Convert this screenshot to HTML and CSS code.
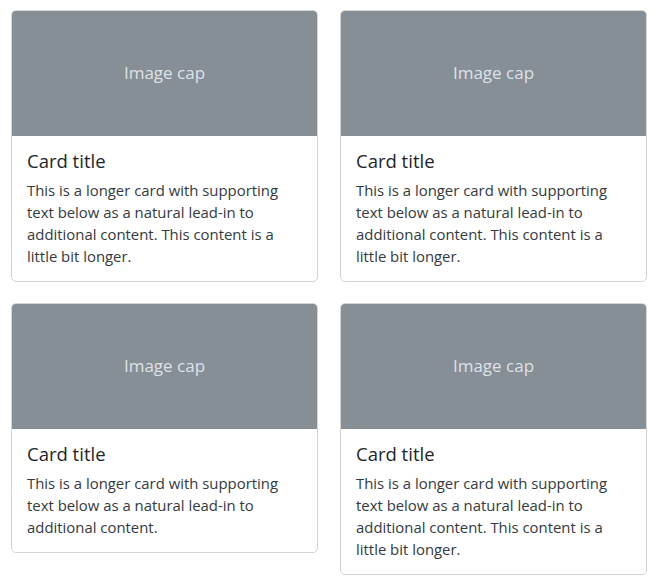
FILE: index.html
```html
<!DOCTYPE html>
<html lang="en">
<head>
  <meta charset="UTF-8">
  <title>Cards</title>
  <link rel="stylesheet" href="styles.css">
</head>
<body>
  <div class="card-grid">
    <div class="card">
      <div class="card-img">Image cap</div>
      <div class="card-body">
        <h5 class="card-title">Card title</h5>
        <p class="card-text">This is a longer card with supporting text below as a natural lead-in to additional content. This content is a little bit longer.</p>
      </div>
    </div>
    <div class="card">
      <div class="card-img">Image cap</div>
      <div class="card-body">
        <h5 class="card-title">Card title</h5>
        <p class="card-text">This is a longer card with supporting text below as a natural lead-in to additional content. This content is a little bit longer.</p>
      </div>
    </div>
    <div class="card">
      <div class="card-img">Image cap</div>
      <div class="card-body">
        <h5 class="card-title">Card title</h5>
        <p class="card-text">This is a longer card with supporting text below as a natural lead-in to additional content.</p>
      </div>
    </div>
    <div class="card">
      <div class="card-img">Image cap</div>
      <div class="card-body">
        <h5 class="card-title">Card title</h5>
        <p class="card-text">This is a longer card with supporting text below as a natural lead-in to additional content. This content is a little bit longer.</p>
      </div>
    </div>
  </div>
</body>
</html>
```

FILE: styles.css
```css
body {
  margin: 0;
  padding: 10px 10px 10px 11px;
  background: #fff;
  color: #212529;
  font-family: 'Open Sans', 'Noto Sans', sans-serif;
}
.card-grid {
  display: grid;
  grid-template-columns: 307px 307px;
  column-gap: 22px;
  row-gap: 21px;
  align-items: start;
}
.card {
  border: 1px solid #d4d4d4;
  border-radius: 5px;
  overflow: hidden;
  background: #fff;
}
.card-img {
  height: 126px;
  margin: -1px -1px 0;
  padding-bottom: 2px;
  box-sizing: border-box;
  background: #868e96;
  color: #dee2e6;
  font-size: 17px;
  display: flex;
  align-items: center;
  justify-content: center;
}
.card-body {
  padding: 14px 15px 14px;
}
.card-title {
  margin: 0 0 7px;
  font-size: 18.5px;
  font-weight: normal;
  line-height: 22px;
}
.card-text {
  margin: 0;
  font-size: 14.9px;
  line-height: 22px;
  color: #343a40;
}
```
